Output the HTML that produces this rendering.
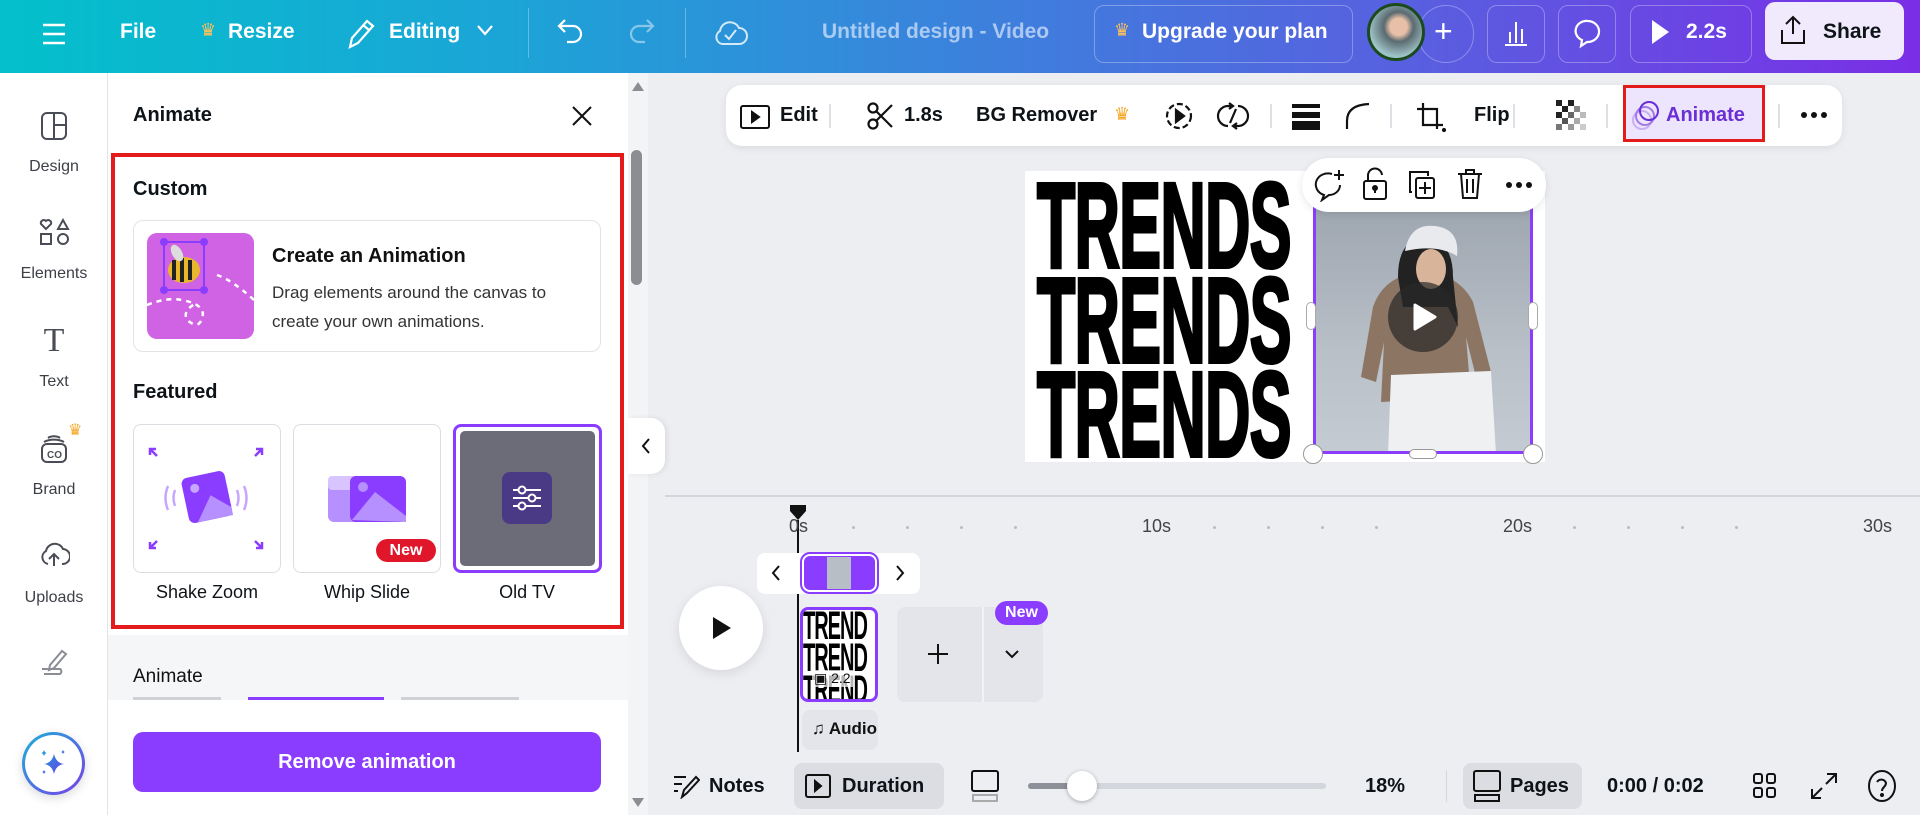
<!DOCTYPE html>
<html><head><meta charset="utf-8"><style>
*{box-sizing:border-box;margin:0;padding:0}
body{width:1920px;height:815px;overflow:hidden;font-family:"Liberation Sans",sans-serif;background:#eceef2;position:relative;color:#0e1318}
.a{position:absolute}
.top{left:0;top:0;width:1920px;height:73px;background:linear-gradient(90deg,#03c0cb 0%,#1aa6d6 25%,#3b82dc 50%,#5a5de0 75%,#7a2ee6 100%)}
.tw{color:#fff;font-weight:bold;font-size:21px;top:20px}
.tb{border:1px solid rgba(255,255,255,.3);border-radius:10px;top:5px;height:58px}
.rail{left:0;top:73px;width:108px;height:742px;background:#fff;border-right:1px solid #e3e4e8}
.rl{width:108px;text-align:center;font-size:16px;color:#3c3f46;left:0}
.panel{left:108px;top:73px;width:520px;height:742px;background:#fff}
.h{font-weight:bold;font-size:20px}
.tile{width:148px;height:149px;border:1px solid #dcdde2;border-radius:8px;background:#fff}
.lab{font-size:18px;text-align:center;width:148px;top:582px}
.tbar{left:726px;top:85px;width:1116px;height:61px;background:#fff;border-radius:16px;box-shadow:0 2px 8px rgba(0,0,0,.08)}
.tt{font-size:20px;font-weight:bold;top:104px;color:#0e1318}
.dv{width:2px;height:24px;background:#dde0e5;top:104px}
.tr{font-family:"Liberation Sans",sans-serif;font-weight:bold;font-size:118px;line-height:1;transform-origin:0 0;transform:scaleX(.53) scaleY(1.02);letter-spacing:-1px;color:#000;left:1037px;-webkit-text-stroke:4px #000}
.tl{font-size:18px;color:#444;top:516px}
.dot{width:3px;height:3px;background:#b8bcc4;border-radius:50%;top:526px}
</style></head><body>

<div class="a top"></div>
<svg class="a" style="left:40px;top:20px" width="28" height="28" viewBox="0 0 28 28" stroke="#fff" stroke-width="2.4"><path d="M3 5h22M3 14h22M3 23h22"/></svg>
<div class="a tw" style="left:120px">File</div>
<div class="a" style="left:200px;top:20px;color:#ffc25a;font-size:18px">♛</div>
<div class="a tw" style="left:228px">Resize</div>
<svg class="a" style="left:345px;top:16px" width="30" height="36" viewBox="0 0 30 36" fill="none" stroke="#fff" stroke-width="2.2"><path d="M5 31l2-9L22 5l6 5-15 17z M18 9l6 5"/></svg>
<div class="a tw" style="left:389px">Editing</div>
<svg class="a" style="left:475px;top:22px" width="20" height="16" viewBox="0 0 20 16" fill="none" stroke="#fff" stroke-width="2.2"><path d="M3 4l7 8 7-8"/></svg>
<div class="a" style="left:528px;top:8px;width:1px;height:50px;background:rgba(255,255,255,.3)"></div>
<svg class="a" style="left:556px;top:16px" width="30" height="34" viewBox="0 0 30 34" fill="none" stroke="#fff" stroke-width="2.2"><path d="M9 4L3 10l6 6M3 10h14a8 8 0 010 16h-6"/></svg>
<svg class="a" style="left:626px;top:16px" width="30" height="34" viewBox="0 0 30 34" fill="none" stroke="rgba(255,255,255,.45)" stroke-width="2.2"><path d="M21 4l6 6-6 6M27 10H13a8 8 0 000 16h6"/></svg>
<div class="a" style="left:685px;top:8px;width:1px;height:50px;background:rgba(255,255,255,.3)"></div>
<svg class="a" style="left:712px;top:16px" width="36" height="34" viewBox="0 0 36 34" fill="none" stroke="rgba(255,255,255,.8)" stroke-width="2"><path d="M10 28a7 7 0 01-2-13 10 10 0 0119-3 8 8 0 010 16z"/><path d="M13 19l4 4 7-9"/></svg>
<div class="a" style="left:822px;top:20px;color:rgba(210,225,250,.75);font-size:21px;font-weight:bold">Untitled design - Video</div>
<div class="a tb" style="left:1094px;width:259px"></div>
<div class="a" style="left:1114px;top:20px;color:#ffc25a;font-size:18px">♛</div>
<div class="a tw" style="left:1142px">Upgrade your plan</div>
<div class="a tb" style="left:1418px;width:56px;border-radius:29px"></div>
<div class="a tw" style="left:1434px;top:13px;font-size:32px;font-weight:normal">+</div>
<div class="a" style="left:1367px;top:3px;width:58px;height:58px;border-radius:50%;background:radial-gradient(circle at 55% 40%,#e8c0a8 0 20%,#5a6a70 35%,#9fc4c8 70%);border:3px solid #1b4a1e"></div>
<div class="a tb" style="left:1487px;width:58px"></div>
<svg class="a" style="left:1501px;top:18px" width="30" height="30" viewBox="0 0 30 30" stroke="#fff" stroke-width="2"><path d="M4 27h22M9 25V14M15 25V4M21 25V11"/></svg>
<div class="a tb" style="left:1558px;width:58px"></div>
<svg class="a" style="left:1573px;top:17px" width="30" height="34" viewBox="0 0 30 34" fill="none" stroke="#fff" stroke-width="2.2"><path d="M15 4a11 10 0 00-6 19l-1 6 6-4a11 10 0 101-21z"/></svg>
<div class="a tb" style="left:1630px;width:122px"></div>
<svg class="a" style="left:1650px;top:19px" width="20" height="26" viewBox="0 0 20 26"><path d="M2 1l17 12L2 25z" fill="#fff"/></svg>
<div class="a tw" style="left:1686px">2.2s</div>
<div class="a" style="left:1765px;top:2px;width:139px;height:58px;background:#f1eafd;border-radius:10px"></div>
<svg class="a" style="left:1778px;top:14px" width="30" height="32" viewBox="0 0 30 32" fill="none" stroke="#111" stroke-width="2"><path d="M15 20V3M8 10l7-7 7 7M4 16v13h22V16"/></svg>
<div class="a" style="left:1823px;top:20px;font-size:21px;font-weight:bold">Share</div>

<!-- rail -->
<div class="a rail"></div>
<svg class="a" style="left:40px;top:111px" width="28" height="30" viewBox="0 0 28 30" fill="none" stroke="#4a4d55" stroke-width="2"><rect x="2" y="2" width="24" height="26" rx="5"/><path d="M14 2v26M14 14h12"/></svg>
<div class="a rl" style="top:158px">Design</div>
<svg class="a" style="left:38px;top:216px" width="32" height="32" viewBox="0 0 32 32" fill="none" stroke="#4a4d55" stroke-width="2"><path d="M8 13L3 8a3 3 0 015-3 3 3 0 015 3z M20 13l5-9 5 9z"/><rect x="3" y="18" width="10" height="10"/><circle cx="25" cy="23" r="5"/></svg>
<div class="a rl" style="top:265px">Elements</div>
<div class="a rl" style="top:322px;font-size:34px;font-family:'Liberation Serif',serif;color:#4a4d55">T</div>
<div class="a rl" style="top:373px">Text</div>
<div class="a" style="left:68px;top:420px;color:#f5a623;font-size:16px">♛</div>
<svg class="a" style="left:38px;top:432px" width="32" height="34" viewBox="0 0 32 34" fill="none" stroke="#4a4d55" stroke-width="2"><rect x="4" y="12" width="24" height="18" rx="5"/><path d="M6 10a14 8 0 0120 0M10 6a8 5 0 0112 0"/><text x="9" y="26" font-size="10" fill="#4a4d55" stroke="none" font-family="Liberation Sans" font-weight="bold">CO</text></svg>
<div class="a rl" style="top:481px">Brand</div>
<svg class="a" style="left:38px;top:538px" width="32" height="32" viewBox="0 0 32 32" fill="none" stroke="#4a4d55" stroke-width="2"><path d="M10 26a7 7 0 01-2-13 9 9 0 0117-2 7 7 0 01-1 15M16 28V16M11 21l5-5 5 5"/></svg>
<div class="a rl" style="top:589px">Uploads</div>
<svg class="a" style="left:38px;top:645px" width="32" height="32" viewBox="0 0 32 32" fill="none" stroke="#8a8d95" stroke-width="2"><path d="M12 20l12-14 4 3-12 14-5 2z M4 24h18a3 3 0 010 5H6"/></svg>
<div class="a" style="left:22px;top:732px;width:63px;height:63px;border-radius:50%;background:linear-gradient(135deg,#1bb0d8,#7a3ee8);box-shadow:0 3px 10px rgba(0,0,0,.15)"></div>
<div class="a" style="left:25px;top:735px;width:57px;height:57px;border-radius:50%;background:#fff"></div>
<svg class="a" style="left:36px;top:746px" width="34" height="34" viewBox="0 0 34 34"><defs><linearGradient id="g" x1="0" y1="0" x2="1" y2="1"><stop offset="0" stop-color="#1aa3d8"/><stop offset="1" stop-color="#6a3ee8"/></linearGradient></defs><path d="M18 8q2 9 10 10-8 1-10 10-2-9-10-10 8-1 10-10z M8 4q1 3 3 3-2 0-3 3-1-3-3-3 2 0 3-3z M27 4q1 2 2 2-1 0-2 2-1-2-2-2 1 0 2-2z M8 24q1 2 2 2-1 0-2 2-1-2-2-2 1 0 2-2z" fill="url(#g)"/></svg>

<!-- panel -->
<div class="a panel"></div>
<div class="a h" style="left:133px;top:104px">Animate</div>
<svg class="a" style="left:570px;top:104px" width="24" height="24" viewBox="0 0 24 24" stroke="#111" stroke-width="2"><path d="M3 3l18 18M21 3L3 21"/></svg>
<div class="a" style="left:628px;top:73px;width:20px;height:742px;background:#f3f4f6"></div>
<div class="a" style="left:632px;top:82px;border:6px solid transparent;border-bottom:9px solid #8b8d92;border-top:0"></div>
<div class="a" style="left:631px;top:150px;width:11px;height:135px;background:#8b8d92;border-radius:6px"></div>
<div class="a" style="left:632px;top:798px;border:6px solid transparent;border-top:9px solid #8b8d92;border-bottom:0"></div>
<div class="a" style="left:108px;top:635px;width:520px;height:65px;background:#f5f6f8"></div>
<div class="a" style="left:133px;top:666px;font-size:19px;color:#111">Animate</div>
<div class="a" style="left:133px;top:697px;width:88px;height:3px;background:#cfd1d6"></div>
<div class="a" style="left:248px;top:697px;width:136px;height:3px;background:#8b3dff"></div>
<div class="a" style="left:401px;top:697px;width:118px;height:3px;background:#cfd1d6"></div>
<div class="a" style="left:133px;top:732px;width:468px;height:60px;background:#8b3dff;border-radius:10px;color:#fff;font-weight:bold;font-size:20px;text-align:center;line-height:60px">Remove animation</div>

<div class="a" style="left:111px;top:153px;width:513px;height:476px;border:4px solid #e31b1b"></div>
<div class="a h" style="left:133px;top:178px">Custom</div>
<div class="a" style="left:133px;top:220px;width:468px;height:132px;border:1px solid #e2e3e7;border-radius:10px"></div>
<div class="a" style="left:147px;top:233px;width:107px;height:106px;background:#d063e3;border-radius:10px;overflow:hidden">
<svg width="107" height="106" viewBox="0 0 107 106"><path d="M0 72q20-8 35-5 25 5 20 18-3 12-15 2-5-10 10-17" stroke="#fff" stroke-width="2.5" stroke-dasharray="5 5" fill="none"/><path d="M70 42q15 5 37 25" stroke="#fff" stroke-width="2.5" stroke-dasharray="5 5" fill="none"/><rect x="17" y="9" width="40" height="48" fill="none" stroke="#8a3dff" stroke-width="2"/><circle cx="17" cy="9" r="4" fill="#8a3dff"/><circle cx="57" cy="9" r="4" fill="#8a3dff"/><circle cx="17" cy="57" r="4" fill="#8a3dff"/><circle cx="57" cy="57" r="4" fill="#8a3dff"/><ellipse cx="37" cy="37" rx="16" ry="13" fill="#e9b72c"/><path d="M27 27v20M35 25v24M43 27v20" stroke="#222" stroke-width="4"/><ellipse cx="30" cy="20" rx="5" ry="9" fill="#ddd" transform="rotate(-30 30 20)"/></svg></div>
<div class="a" style="left:272px;top:245px;font-size:20px;font-weight:bold;color:#111">Create an Animation</div>
<div class="a" style="left:272px;top:278px;font-size:17px;color:#333;line-height:29px">Drag elements around the canvas to<br>create your own animations.</div>
<div class="a h" style="left:133px;top:381px">Featured</div>

<div class="a tile" style="left:133px;top:424px"></div>
<svg class="a" style="left:133px;top:424px" width="148" height="149" viewBox="0 0 148 149"><g stroke="#8b3dff" stroke-width="2.5" fill="none"><path d="M24 32l-7-7M17 31v-6h6M122 32l7-7M123 25h6v6M24 117l-7 7M17 118v6h6M122 117l7 7M129 118v6h-6"/></g><path d="M35 62q-5 12 0 24M42 66q-3 8 0 16M111 62q5 12 0 24M104 66q3 8 0 16" stroke="#c7a6ff" stroke-width="2.5" fill="none"/><g transform="rotate(-12 74 74)"><rect x="52" y="50" width="44" height="46" rx="6" fill="#8b3dff"/><path d="M60 96l18-24 18 16v8z" fill="#b690ff"/><circle cx="64" cy="62" r="4.5" fill="#c7a6ff"/></g></svg>
<div class="a lab" style="left:133px">Shake Zoom</div>

<div class="a tile" style="left:293px;top:424px"></div>
<svg class="a" style="left:293px;top:424px" width="148" height="149" viewBox="0 0 148 149"><rect x="35" y="52" width="40" height="46" rx="6" fill="#b690ff"/><rect x="35" y="52" width="40" height="14" rx="4" fill="#d8c4ff"/><rect x="57" y="52" width="56" height="46" rx="6" fill="#8b3dff"/><path d="M59 96l23-28 31 24v6z" fill="#b690ff"/><circle cx="70" cy="63" r="5" fill="#b690ff"/></svg>
<div class="a" style="left:376px;top:539px;width:60px;height:23px;background:#e0162b;border-radius:12px;color:#fff;font-weight:bold;font-size:16px;text-align:center;line-height:23px">New</div>
<div class="a lab" style="left:293px">Whip Slide</div>

<div class="a" style="left:453px;top:424px;width:149px;height:149px;border:3px solid #8b3dff;border-radius:8px;background:#fff"></div>
<div class="a" style="left:460px;top:431px;width:135px;height:135px;background:#6b6c77;border-radius:5px"></div>
<svg class="a" style="left:502px;top:472px" width="50" height="52" viewBox="0 0 50 52"><rect width="50" height="52" rx="8" fill="#4a3a86"/><g stroke="#fff" stroke-width="2" fill="#4a3a86"><path d="M11 18h28M11 26h28M11 34h28"/><circle cx="20" cy="18" r="3.5"/><circle cx="30" cy="26" r="3.5"/><circle cx="20" cy="34" r="3.5"/></g></svg>
<div class="a lab" style="left:453px">Old TV</div>

<!-- collapse tab -->
<div class="a" style="left:628px;top:418px;width:37px;height:56px;background:#fff;border-radius:0 14px 14px 0;box-shadow:2px 0 6px rgba(0,0,0,.08)"></div>
<svg class="a" style="left:640px;top:437px" width="12" height="18" viewBox="0 0 12 18" fill="none" stroke="#111" stroke-width="2"><path d="M9 2L3 9l6 7"/></svg>

<!-- toolbar -->
<div class="a tbar"></div>
<svg class="a" style="left:740px;top:105px" width="30" height="24" viewBox="0 0 30 24" fill="none" stroke="#111" stroke-width="2"><rect x="1" y="1" width="28" height="22" rx="2"/><path d="M12 7l7 5-7 5z" fill="#111"/></svg>
<div class="a tt" style="left:780px">Edit</div>
<div class="a dv" style="left:829px"></div>
<svg class="a" style="left:866px;top:101px" width="28" height="30" viewBox="0 0 28 30" fill="none" stroke="#111" stroke-width="2.2"><circle cx="7" cy="7" r="4.5"/><circle cx="7" cy="23" r="4.5"/><path d="M10 10l16 16M10 20L26 4"/></svg>
<div class="a tt" style="left:904px">1.8s</div>
<div class="a tt" style="left:976px">BG Remover</div>
<div class="a" style="left:1114px;top:104px;color:#f5a623;font-size:18px">♛</div>
<svg class="a" style="left:1164px;top:101px" width="30" height="30" viewBox="0 0 30 30" fill="none" stroke="#111" stroke-width="2.2"><circle cx="15" cy="15" r="12" stroke-dasharray="6 3"/><path d="M12 9l8 6-8 6z" fill="#111"/></svg>
<svg class="a" style="left:1216px;top:101px" width="34" height="30" viewBox="0 0 34 30" fill="none" stroke="#111" stroke-width="2.2"><path d="M12 25a10 10 0 010-20h4M22 5a10 10 0 010 20h-4M13 2l4 3-4 3M21 22l-4 3 4 3M20 8l-6 14"/></svg>
<div class="a dv" style="left:1270px"></div>
<svg class="a" style="left:1292px;top:104px" width="28" height="26" viewBox="0 0 28 26"><rect x="0" y="0" width="28" height="4" fill="#111"/><rect x="0" y="8" width="28" height="6" fill="#111"/><rect x="0" y="17" width="28" height="9" fill="#111"/></svg>
<svg class="a" style="left:1344px;top:101px" width="28" height="30" viewBox="0 0 28 30" fill="none" stroke="#111" stroke-width="2.2"><path d="M3 28V20Q3 4 25 3"/></svg>
<div class="a dv" style="left:1390px"></div>
<svg class="a" style="left:1415px;top:101px" width="32" height="32" viewBox="0 0 32 32" fill="none" stroke="#111" stroke-width="2.2"><path d="M8 2v22h20M2 8h20v20"/><circle cx="29" cy="29" r="1" fill="#111"/></svg>
<div class="a tt" style="left:1474px">Flip</div>
<div class="a dv" style="left:1513px"></div>
<svg class="a" style="left:1556px;top:100px" width="30" height="32" viewBox="0 0 30 32"><g fill="#222"><rect x="0" y="0" width="6" height="6"/><rect x="12" y="0" width="6" height="6"/><rect x="6" y="6" width="6" height="6"/><rect x="18" y="6" width="6" height="6" fill="#888"/><rect x="0" y="12" width="6" height="6"/><rect x="12" y="12" width="6" height="6" fill="#666"/><rect x="6" y="18" width="6" height="6" fill="#555"/><rect x="24" y="12" width="6" height="6" fill="#bbb"/><rect x="0" y="24" width="6" height="6" fill="#777"/><rect x="12" y="24" width="6" height="6" fill="#999"/><rect x="18" y="18" width="6" height="6" fill="#aaa"/><rect x="24" y="24" width="6" height="6" fill="#ccc"/></g></svg>
<div class="a dv" style="left:1606px"></div>
<div class="a" style="left:1623px;top:85px;width:142px;height:57px;background:#ede4fd;border:3px solid #e31b1b"></div>
<svg class="a" style="left:1630px;top:98px" width="32" height="32" viewBox="0 0 32 32" fill="none" stroke-width="2"><circle cx="12" cy="22" r="9" stroke="#c9b0f0"/><circle cx="15" cy="18" r="9" stroke="#a37ae8"/><circle cx="19" cy="13" r="9" stroke="#6b2fd6"/></svg>
<div class="a tt" style="left:1666px;color:#6b2fd6">Animate</div>
<div class="a dv" style="left:1778px"></div>
<svg class="a" style="left:1800px;top:111px" width="28" height="8" viewBox="0 0 28 8" fill="#111"><circle cx="4" cy="4" r="3"/><circle cx="14" cy="4" r="3"/><circle cx="24" cy="4" r="3"/></svg>

<!-- canvas page -->
<div class="a" style="left:1025px;top:171px;width:520px;height:291px;background:#fff"></div>
<div class="a tr" style="top:166px">TRENDS</div>
<div class="a tr" style="top:261px">TRENDS</div>
<div class="a tr" style="top:355px">TRENDS</div>
<div class="a" style="left:1313px;top:207px;width:220px;height:247px;background:linear-gradient(180deg,#9ea6b0,#b9c0c8 60%,#c5cbd2);overflow:hidden">
<svg width="220" height="247" viewBox="0 0 220 247"><path d="M60 100q10-30 45-35 40 0 55 30l18 70-15 5-10-40 5 60-90 5 3-60-8 40-15-5z" fill="#8c7563"/><path d="M78 168l100-4 5 83H75z" fill="#eef0f2"/><path d="M85 70q0-40 30-40 25 5 25 40l5 50-10-20-45 0z" fill="#222"/><ellipse cx="118" cy="62" rx="15" ry="20" fill="#d8b49a"/><path d="M92 44q5-28 30-25 25 3 22 30-20-12-52-5z" fill="#e8eaed"/></svg></div>
<div class="a" style="left:1313px;top:207px;width:220px;height:247px;border:3px solid #8b3dff;border-top:0"></div>
<div class="a" style="left:1388px;top:282px;width:70px;height:70px;border-radius:50%;background:rgba(40,40,40,.7)"></div>
<svg class="a" style="left:1413px;top:303px" width="24" height="28" viewBox="0 0 24 28"><path d="M2 2l20 12L2 26z" fill="#fff" stroke="#fff" stroke-linejoin="round" stroke-width="3"/></svg>
<div class="a" style="left:1306px;top:302px;width:10px;height:28px;background:#fff;border:1px solid #aaa;border-radius:5px"></div>
<div class="a" style="left:1528px;top:302px;width:10px;height:28px;background:#fff;border:1px solid #aaa;border-radius:5px"></div>
<div class="a" style="left:1303px;top:444px;width:20px;height:20px;background:#fff;border:1px solid #999;border-radius:50%"></div>
<div class="a" style="left:1523px;top:444px;width:20px;height:20px;background:#fff;border:1px solid #999;border-radius:50%"></div>
<div class="a" style="left:1409px;top:449px;width:28px;height:10px;background:#fff;border:1px solid #999;border-radius:5px"></div>
<div class="a" style="left:1302px;top:158px;width:244px;height:54px;background:#fff;border-radius:27px;box-shadow:0 2px 8px rgba(0,0,0,.1)"></div>
<svg class="a" style="left:1312px;top:168px" width="34" height="34" viewBox="0 0 34 34" fill="none" stroke="#111" stroke-width="2"><path d="M20 6a11 10 0 10-8 21l-2 5 7-5a11 10 0 0011-10M27 2v10M22 7h10"/></svg>
<svg class="a" style="left:1362px;top:167px" width="26" height="34" viewBox="0 0 26 34" fill="none" stroke="#111" stroke-width="2"><path d="M6 14V9a7 7 0 0114-1"/><rect x="2" y="14" width="22" height="18" rx="2"/><path d="M13 20v6"/><circle cx="13" cy="21" r="2" fill="#111"/></svg>
<svg class="a" style="left:1408px;top:170px" width="28" height="30" viewBox="0 0 28 30" fill="none" stroke="#111" stroke-width="2"><path d="M4 22H2V2h18v4"/><rect x="8" y="8" width="18" height="20" rx="2"/><path d="M17 12v12M11 18h12"/></svg>
<svg class="a" style="left:1457px;top:168px" width="26" height="32" viewBox="0 0 26 32" fill="none" stroke="#111" stroke-width="2"><path d="M1 6h24M9 6V2h8v4M4 6l2 24h14l2-24M10 11v14M16 11v14"/></svg>
<svg class="a" style="left:1505px;top:181px" width="28" height="8" viewBox="0 0 28 8" fill="#111"><circle cx="4" cy="4" r="3"/><circle cx="14" cy="4" r="3"/><circle cx="24" cy="4" r="3"/></svg>

<!-- timeline -->
<div class="a" style="left:665px;top:495px;width:1255px;height:2px;background:#d3d6dc"></div>
<svg class="a" style="left:788px;top:503px" width="20" height="18" viewBox="0 0 20 18"><path d="M2 2h16v6l-8 9-8-9z" fill="#111"/></svg>
<div class="a" style="left:797px;top:520px;width:2px;height:232px;background:#111"></div>
<div class="a tl" style="left:789px">0s</div>
<div class="a tl" style="left:1142px">10s</div>
<div class="a tl" style="left:1503px">20s</div>
<div class="a tl" style="left:1863px">30s</div>
<div class="a dot" style="left:852px"></div><div class="a dot" style="left:906px"></div><div class="a dot" style="left:960px"></div><div class="a dot" style="left:1014px"></div>
<div class="a dot" style="left:1213px"></div><div class="a dot" style="left:1267px"></div><div class="a dot" style="left:1321px"></div><div class="a dot" style="left:1375px"></div>
<div class="a dot" style="left:1573px"></div><div class="a dot" style="left:1627px"></div><div class="a dot" style="left:1681px"></div><div class="a dot" style="left:1735px"></div>
<div class="a" style="left:757px;top:553px;width:163px;height:41px;background:#fff;border-radius:8px"></div>
<svg class="a" style="left:771px;top:564px" width="10" height="18" viewBox="0 0 10 18" fill="none" stroke="#111" stroke-width="2"><path d="M8 2L2 9l6 7"/></svg>
<svg class="a" style="left:895px;top:564px" width="10" height="18" viewBox="0 0 10 18" fill="none" stroke="#111" stroke-width="2"><path d="M2 2l6 7-6 7"/></svg>
<div class="a" style="left:802px;top:554px;width:75px;height:38px;background:#8b3dff;border-radius:8px;border:2px solid #fff;outline:2px solid #8b3dff"></div>
<div class="a" style="left:827px;top:557px;width:24px;height:32px;background:#b8bec6"></div>
<div class="a" style="left:679px;top:586px;width:84px;height:84px;border-radius:50%;background:#fff;box-shadow:0 3px 12px rgba(0,0,0,.1)"></div>
<svg class="a" style="left:711px;top:615px" width="22" height="26" viewBox="0 0 22 26"><path d="M2 2l18 11L2 24z" fill="#111"/></svg>
<div class="a" style="left:800px;top:607px;width:78px;height:95px;border:3px solid #8b3dff;border-radius:8px;background:#fff;overflow:hidden">
<div style="font-weight:bold;font-size:40px;line-height:32px;letter-spacing:-2px;transform:scaleX(.5);transform-origin:0 0;color:#000;width:160px">TREND<br>TREND<br>TREND</div></div>
<div class="a" style="left:812px;top:670px;font-size:14px;color:#111;background:rgba(255,255,255,.7);padding:0 2px">▣ 2.2</div>
<div class="a" style="left:897px;top:607px;width:146px;height:95px;background:#e4e5ea;border-radius:8px"></div>
<div class="a" style="left:982px;top:607px;width:2px;height:95px;background:#f2f3f5"></div>
<svg class="a" style="left:926px;top:642px" width="24" height="24" viewBox="0 0 24 24" stroke="#111" stroke-width="2"><path d="M12 2v20M2 12h20"/></svg>
<svg class="a" style="left:1004px;top:648px" width="16" height="12" viewBox="0 0 16 12" fill="none" stroke="#111" stroke-width="2"><path d="M2 3l6 6 6-6"/></svg>
<div class="a" style="left:995px;top:601px;width:53px;height:24px;background:#8b3dff;border-radius:12px;color:#fff;font-weight:bold;font-size:16px;text-align:center;line-height:24px">New</div>
<div class="a" style="left:802px;top:710px;width:76px;height:40px;background:#e4e5ea;border-radius:8px"></div>
<div class="a" style="left:812px;top:719px;font-size:17px;font-weight:bold;color:#111">♫ Audio</div>

<!-- bottom bar -->
<svg class="a" style="left:672px;top:773px" width="28" height="26" viewBox="0 0 28 26" fill="none" stroke="#111" stroke-width="2"><path d="M2 4h12M2 11h8M2 18h4M10 24l2-7 12-13 3 3-12 13z"/></svg>
<div class="a" style="left:709px;top:775px;font-size:20px;font-weight:bold">Notes</div>
<div class="a" style="left:794px;top:763px;width:150px;height:46px;background:#dcdde2;border-radius:8px"></div>
<svg class="a" style="left:805px;top:774px" width="26" height="24" viewBox="0 0 26 24" fill="none" stroke="#111" stroke-width="2"><rect x="1" y="1" width="24" height="22" rx="2"/><path d="M10 7l6 5-6 5z" fill="#111"/></svg>
<div class="a" style="left:842px;top:775px;font-size:20px;font-weight:bold">Duration</div>
<svg class="a" style="left:970px;top:769px" width="30" height="34" viewBox="0 0 30 34" fill="none" stroke="#111" stroke-width="2"><rect x="2" y="2" width="26" height="20" rx="2"/><rect x="3" y="26" width="24" height="6" stroke="#aaa"/></svg>
<div class="a" style="left:1028px;top:783px;width:298px;height:6px;background:#d3d6dc;border-radius:3px"></div>
<div class="a" style="left:1028px;top:783px;width:54px;height:6px;background:#8d9098;border-radius:3px"></div>
<div class="a" style="left:1067px;top:771px;width:30px;height:30px;background:#fff;border-radius:50%;box-shadow:0 1px 4px rgba(0,0,0,.3)"></div>
<div class="a" style="left:1365px;top:775px;font-size:20px;font-weight:bold">18%</div>
<div class="a" style="left:1446px;top:770px;width:1px;height:32px;background:#d3d6dc"></div>
<div class="a" style="left:1463px;top:763px;width:119px;height:46px;background:#dcdde2;border-radius:8px"></div>
<svg class="a" style="left:1472px;top:769px" width="30" height="34" viewBox="0 0 30 34" fill="none" stroke="#111" stroke-width="2"><rect x="2" y="2" width="26" height="20" rx="2"/><rect x="3" y="26" width="24" height="6"/></svg>
<div class="a" style="left:1510px;top:775px;font-size:20px;font-weight:bold">Pages</div>
<div class="a" style="left:1607px;top:775px;font-size:20px;font-weight:bold">0:00 / 0:02</div>
<svg class="a" style="left:1752px;top:772px" width="26" height="28" viewBox="0 0 26 28" fill="none" stroke="#111" stroke-width="2"><rect x="2" y="2" width="8" height="9" rx="2"/><rect x="15" y="2" width="8" height="9" rx="2"/><rect x="2" y="16" width="8" height="9" rx="2"/><rect x="15" y="16" width="8" height="9" rx="2"/></svg>
<svg class="a" style="left:1810px;top:772px" width="28" height="28" viewBox="0 0 28 28" fill="none" stroke="#111" stroke-width="2"><path d="M17 2h9v9M26 2L16 12M11 26H2v-9M2 26l10-10"/></svg>
<svg class="a" style="left:1866px;top:769px" width="32" height="34" viewBox="0 0 32 34" fill="none" stroke="#111" stroke-width="2"><ellipse cx="16" cy="17" rx="13" ry="15"/><path d="M11 13a5 5 0 019 1c0 4-4 4-4 8"/><circle cx="16" cy="26" r="1" fill="#111"/></svg>
</body></html>
